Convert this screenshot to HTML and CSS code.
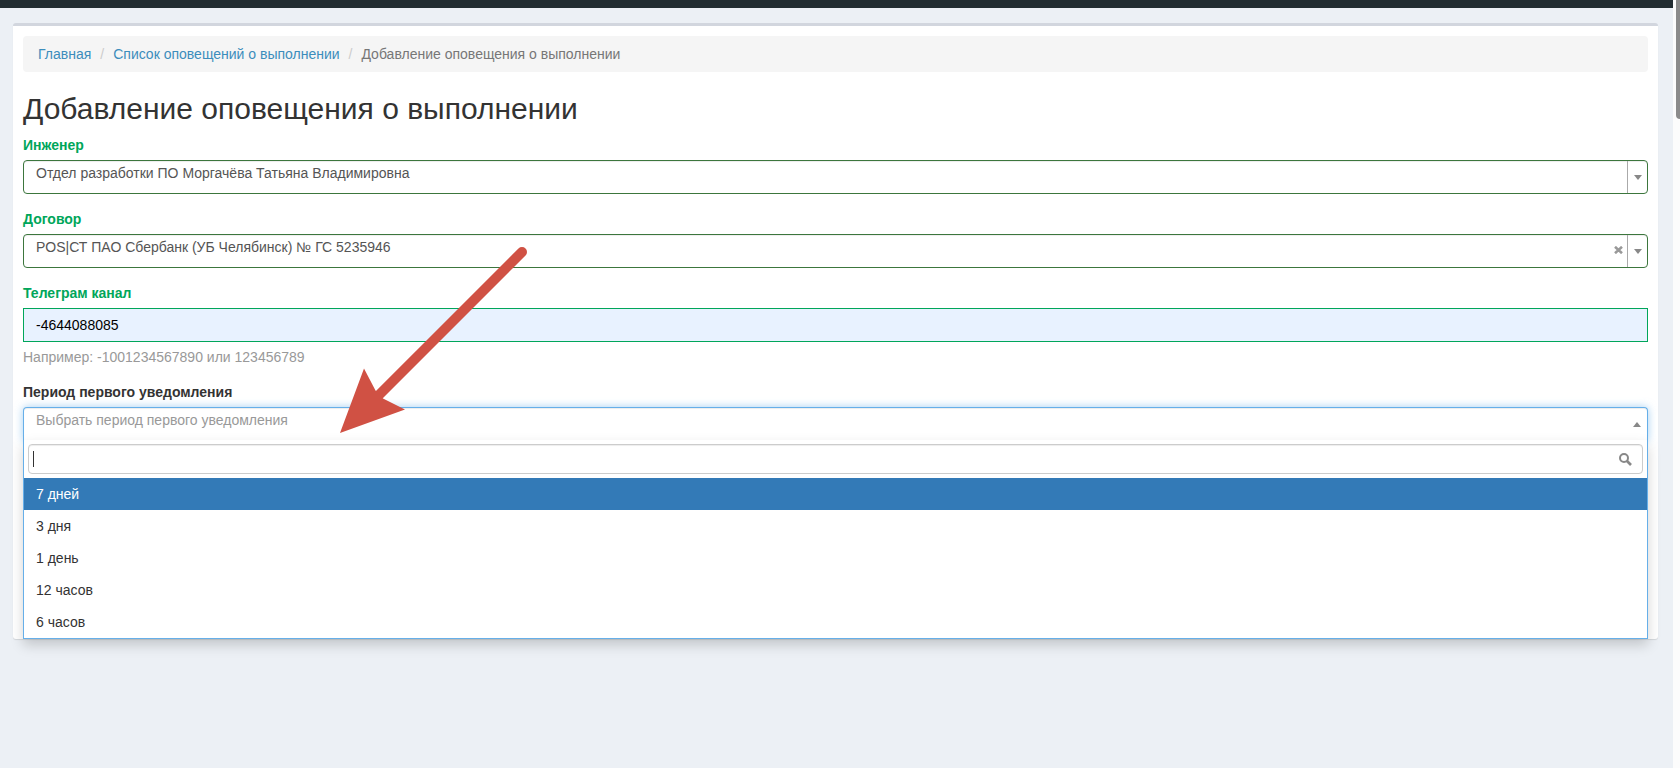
FILE: index.html
```
<!DOCTYPE html>
<html lang="ru">
<head>
    <meta charset="UTF-8">
    <meta name="viewport" content="width=device-width, initial-scale=1.0">
    <title>Добавление оповещения о выполнении</title>
    <link rel="stylesheet" href="styles.css">
</head>
<body>
    <div class="wrapper">
        <header class="main-header"></header>

        <main class="content">
            <div class="box">
                <nav class="breadcrumb">
                    <a href="#">Главная</a>
                    <span class="separator">/</span>
                    <a href="#">Список оповещений о выполнении</a>
                    <span class="separator">/</span>
                    <span class="active">Добавление оповещения о выполнении</span>
                </nav>

                <h1>Добавление оповещения о выполнении</h1>

                <form>
                    <div class="form-group has-success">
                        <label for="engineer">Инженер</label>
                        <div class="select-wrap">
                            <select id="engineer" class="select">
                                <option>Отдел разработки ПО Моргачёва Татьяна Владимировна</option>
                            </select>
                            <span class="select-arrow"></span>
                        </div>
                    </div>

                    <div class="form-group has-success">
                        <label for="contract">Договор</label>
                        <div class="select-wrap">
                            <select id="contract" class="select">
                                <option>POS|СТ ПАО Сбербанк (УБ Челябинск) № ГС 5235946</option>
                            </select>
                            <button type="button" class="select-clear" aria-label="Очистить">
                                <svg width="9" height="8" viewBox="0 0 9 8"><path d="M1 0.800L8 7.200M8 0.800L1 7.200" stroke="#999" stroke-width="2.6"/></svg>
                            </button>
                            <span class="select-arrow"></span>
                        </div>
                    </div>

                    <div class="form-group has-success">
                        <label for="telegram">Телеграм канал</label>
                        <input type="text" id="telegram" class="form-control" value="-4644088085">
                        <p class="hint">Например: -1001234567890 или 123456789</p>
                    </div>

                    <div class="form-group open">
                        <label for="period">Период первого уведомления</label>
                        <div class="select-wrap">
                            <select id="period" class="select">
                                <option>Выбрать период первого уведомления</option>
                            </select>
                            <span class="select-arrow"></span>
                        </div>
                        <div class="dropdown">
                            <div class="search">
                                <input type="text" class="search-field" aria-label="Поиск">
                                <span class="cursor"></span>
                                <svg class="search-icon" width="13" height="13" viewBox="0 0 13 13" fill="none" stroke="#888">
                                    <circle cx="5" cy="5" r="4" stroke-width="2"/>
                                    <path d="M8 8L12 12" stroke-width="2.6"/>
                                </svg>
                            </div>
                            <ul class="options" role="listbox" aria-label="Период первого уведомления">
                                <li role="option" class="highlighted" aria-selected="true">7 дней</li>
                                <li role="option">3 дня</li>
                                <li role="option">1 день</li>
                                <li role="option">12 часов</li>
                                <li role="option">6 часов</li>
                            </ul>
                        </div>
                    </div>
                </form>
            </div>
        </main>

        <svg class="pointer" width="190" height="190" viewBox="0 0 190 190">
            <path d="M183 7L38 152" stroke="#d05144" stroke-width="10" stroke-linecap="round"/>
            <path d="M1 188L25 123.500L36.500 145.500L44 153.500L66 164.500Z" fill="#d05144"/>
        </svg>
    </div>

    <div class="scrollbar"><div class="thumb"></div></div>
</body>
</html>
```
FILE: styles.css
```
* {
    box-sizing: border-box;
}

body {
    margin: 0;
    display: flex;
    min-height: 100vh;
    font-family: "Liberation Sans", Arial, sans-serif;
    font-size: 14px;
    line-height: 20px;
    color: #333;
    background-color: #ecf0f5;
}

a {
    color: #3c8dbc;
    text-decoration: none;
}

.wrapper {
    position: relative;
    flex: 1;
}

.main-header {
    height: 8px;
    background-color: #222d32;
}

.content {
    padding: 15px 15px 15px 13px;
}

.box {
    padding: 10px 10px 0;
    background-color: #fff;
    border-top: 3px solid #d2d6de;
    border-radius: 3px;
    box-shadow: 0 1px 1px rgba(0,0,0,0.1);
}

.breadcrumb {
    display: flex;
    gap: 9px;
    padding: 8px 15px;
    margin-bottom: 20px;
    background-color: #f5f5f5;
    border-radius: 4px;
}

.separator {
    color: #ccc;
}

.active {
    color: #777;
}

h1 {
    margin: 0 0 10px;
    font-size: 30px;
    line-height: 33px;
    font-weight: 500;
}

.form-group {
    margin-bottom: 15px;
}

.form-group.open {
    margin-bottom: 0;
}

label {
    display: block;
    margin-bottom: 5px;
    font-weight: bold;
}

.has-success label {
    color: #00a65a;
}

.select-wrap {
    position: relative;
}

.select {
    display: block;
    width: 100%;
    height: 34px;
    padding: 2px 48px 10px 12px;
    font: inherit;
    color: #555;
    background-color: #fff;
    border: 1px solid #3c763d;
    border-radius: 4px;
    box-shadow: inset 0 1px 1px rgba(0,0,0,0.075);
    appearance: none;
}

.select-arrow {
    position: absolute;
    top: 1px;
    right: 1px;
    bottom: 1px;
    width: 20px;
    display: flex;
    align-items: center;
    justify-content: center;
    border-left: 1px solid #aaa;
    pointer-events: none;
}

.select-arrow::after {
    content: "";
    border: 4px solid transparent;
    border-top: 5px solid #888;
    border-bottom: 0;
}

.select-clear {
    position: absolute;
    top: 12px;
    right: 25px;
    display: flex;
    padding: 0;
    background: none;
    border: 0;
    cursor: pointer;
}

.form-control {
    display: block;
    width: 100%;
    height: 34px;
    padding: 6px 12px;
    font: inherit;
    color: #000;
    background-color: #e8f2ff;
    border: 1px solid #00a65a;
    border-radius: 0;
}

.hint {
    margin: 5px 0 0;
    color: #999;
}

/* opened select */
.open .select {
    color: #999;
    border-color: #66afe9;
    border-bottom-color: transparent;
    border-radius: 4px 4px 0 0;
    box-shadow: inset 0 1px 1px rgba(0,0,0,0.075), 0 0 8px rgba(102,175,233,0.6);
}

.open .select-arrow {
    border-left: 0;
}

.open .select-arrow::after {
    border: 4px solid transparent;
    border-bottom: 5px solid #888;
    border-top: 0;
}

.dropdown {
    position: relative;
    margin-top: -1px;
    background-color: #fff;
    border: 1px solid #66afe9;
    border-top: 0;
    box-shadow: 0 6px 12px rgba(0,0,0,0.175);
}

.search {
    position: relative;
    padding: 4px;
}

.search-field {
    display: block;
    width: 100%;
    height: 30px;
    padding: 4px;
    font: inherit;
    border: 1px solid #ccc;
    border-radius: 4px;
    box-shadow: inset 0 1px 1px rgba(0,0,0,0.075);
}

.cursor {
    position: absolute;
    top: 11px;
    left: 9px;
    width: 1px;
    height: 16px;
    background-color: #333;
}

.search-icon {
    position: absolute;
    top: 13px;
    right: 15px;
}

.options {
    margin: 0;
    padding: 0;
    list-style: none;
}

.options li {
    padding: 6px 12px;
}

.options .highlighted {
    color: #fff;
    background-color: #337ab7;
}

/* red arrow over the form */
.pointer {
    position: absolute;
    top: 245px;
    left: 339px;
    pointer-events: none;
}

.scrollbar {
    width: 7px;
    padding-left: 3px;
    background-color: #fcfcfc;
}

.thumb {
    height: 119px;
    background-color: #8b8b8b;
    border-radius: 0 0 0 4px;
}
```
